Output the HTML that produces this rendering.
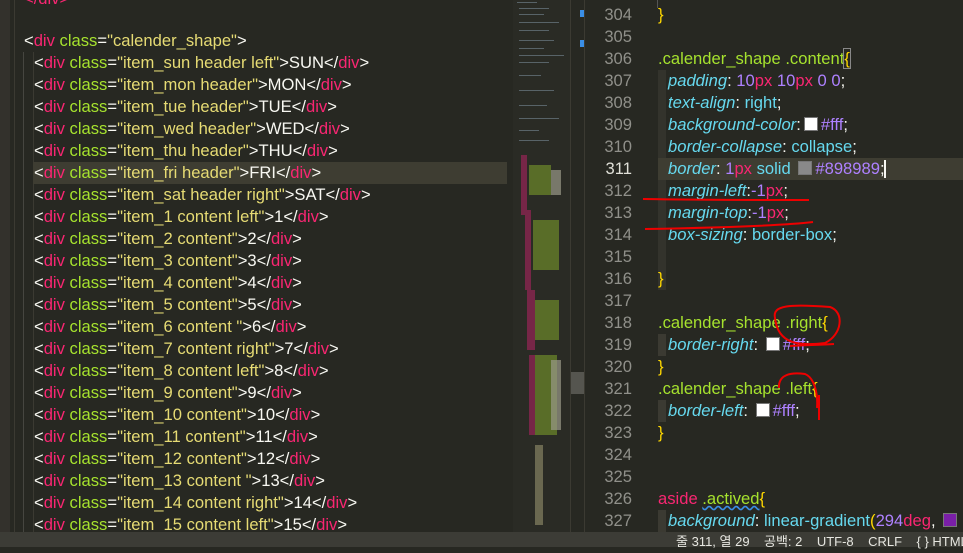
<html><head><style>
body{margin:0;width:963px;height:547px;overflow:hidden;background:#272822;font-family:"Liberation Sans","Noto Sans CJK KR",sans-serif;font-size:16.6px;position:relative}
.l{position:absolute;white-space:pre;color:#f8f8f2;height:22px;line-height:22px}
.t{color:#f92672}.a{color:#a6e22e}.s{color:#e6db74}.p{color:#66d9ef;font-style:italic}.v{color:#66d9ef}.n{color:#ae81ff}.u{color:#f92672}.b{color:#ffd800}
.num{position:absolute;left:590px;width:42px;text-align:right;color:#90908a;font-size:16.6px;line-height:22px}
.sw{display:inline-block;width:12px;height:12px;background:#fff;border:1px solid #777;vertical-align:-1px;margin:0 3px}
</style></head><body>
<div style="position:absolute;left:0;top:0;width:10px;height:547px;background:#33312c"></div>
<div style="position:absolute;left:14px;top:0;width:1px;height:547px;background:#3b3a32"></div>
<div style="position:absolute;left:23px;top:52px;width:1px;height:495px;background:#464640"></div>
<div style="position:absolute;left:33px;top:52px;width:1px;height:495px;background:#3b3a32"></div>
<div style="position:absolute;left:33px;top:162px;width:474px;height:22px;background:#3e3d32"></div>
<div style="position:absolute;left:513px;top:0;width:57px;height:547px;background:#2a2b25"></div>
<div style="position:absolute;left:570px;top:0;width:1px;height:547px;background:#3b3a32"></div>
<div style="position:absolute;left:584px;top:0;width:1px;height:547px;background:#3b3a32"></div>
<div style="position:absolute;left:571px;top:372px;width:13px;height:22px;background:#55554f"></div>
<div style="position:absolute;left:580px;top:10px;width:4px;height:7px;background:#3a8ee6"></div>
<div style="position:absolute;left:580px;top:40px;width:4px;height:7px;background:#3a8ee6"></div>
<div class="l" style="left:24px;top:-12px"><span class="t">&lt;/div&gt;</span></div>
<div class="l" style="left:24px;top:30px">&lt;<span class="t">div</span> <span class="a">class</span>=<span class="s">"calender_shape"</span>&gt;</div>
<div class="l" style="left:34px;top:52px">&lt;<span class="t">div</span> <span class="a">class</span>=<span class="s">"item_sun header left"</span>&gt;SUN&lt;/<span class="t">div</span>&gt;</div>
<div class="l" style="left:34px;top:74px">&lt;<span class="t">div</span> <span class="a">class</span>=<span class="s">"item_mon header"</span>&gt;MON&lt;/<span class="t">div</span>&gt;</div>
<div class="l" style="left:34px;top:96px">&lt;<span class="t">div</span> <span class="a">class</span>=<span class="s">"item_tue header"</span>&gt;TUE&lt;/<span class="t">div</span>&gt;</div>
<div class="l" style="left:34px;top:118px">&lt;<span class="t">div</span> <span class="a">class</span>=<span class="s">"item_wed header"</span>&gt;WED&lt;/<span class="t">div</span>&gt;</div>
<div class="l" style="left:34px;top:140px">&lt;<span class="t">div</span> <span class="a">class</span>=<span class="s">"item_thu header"</span>&gt;THU&lt;/<span class="t">div</span>&gt;</div>
<div class="l" style="left:34px;top:162px">&lt;<span class="t">div</span> <span class="a">class</span>=<span class="s">"item_fri header"</span>&gt;FRI&lt;/<span class="t">div</span>&gt;</div>
<div class="l" style="left:34px;top:184px">&lt;<span class="t">div</span> <span class="a">class</span>=<span class="s">"item_sat header right"</span>&gt;SAT&lt;/<span class="t">div</span>&gt;</div>
<div class="l" style="left:34px;top:206px">&lt;<span class="t">div</span> <span class="a">class</span>=<span class="s">"item_1 content left"</span>&gt;1&lt;/<span class="t">div</span>&gt;</div>
<div class="l" style="left:34px;top:228px">&lt;<span class="t">div</span> <span class="a">class</span>=<span class="s">"item_2 content"</span>&gt;2&lt;/<span class="t">div</span>&gt;</div>
<div class="l" style="left:34px;top:250px">&lt;<span class="t">div</span> <span class="a">class</span>=<span class="s">"item_3 content"</span>&gt;3&lt;/<span class="t">div</span>&gt;</div>
<div class="l" style="left:34px;top:272px">&lt;<span class="t">div</span> <span class="a">class</span>=<span class="s">"item_4 content"</span>&gt;4&lt;/<span class="t">div</span>&gt;</div>
<div class="l" style="left:34px;top:294px">&lt;<span class="t">div</span> <span class="a">class</span>=<span class="s">"item_5 content"</span>&gt;5&lt;/<span class="t">div</span>&gt;</div>
<div class="l" style="left:34px;top:316px">&lt;<span class="t">div</span> <span class="a">class</span>=<span class="s">"item_6 content "</span>&gt;6&lt;/<span class="t">div</span>&gt;</div>
<div class="l" style="left:34px;top:338px">&lt;<span class="t">div</span> <span class="a">class</span>=<span class="s">"item_7 content right"</span>&gt;7&lt;/<span class="t">div</span>&gt;</div>
<div class="l" style="left:34px;top:360px">&lt;<span class="t">div</span> <span class="a">class</span>=<span class="s">"item_8 content left"</span>&gt;8&lt;/<span class="t">div</span>&gt;</div>
<div class="l" style="left:34px;top:382px">&lt;<span class="t">div</span> <span class="a">class</span>=<span class="s">"item_9 content"</span>&gt;9&lt;/<span class="t">div</span>&gt;</div>
<div class="l" style="left:34px;top:404px">&lt;<span class="t">div</span> <span class="a">class</span>=<span class="s">"item_10 content"</span>&gt;10&lt;/<span class="t">div</span>&gt;</div>
<div class="l" style="left:34px;top:426px">&lt;<span class="t">div</span> <span class="a">class</span>=<span class="s">"item_11 content"</span>&gt;11&lt;/<span class="t">div</span>&gt;</div>
<div class="l" style="left:34px;top:448px">&lt;<span class="t">div</span> <span class="a">class</span>=<span class="s">"item_12 content"</span>&gt;12&lt;/<span class="t">div</span>&gt;</div>
<div class="l" style="left:34px;top:470px">&lt;<span class="t">div</span> <span class="a">class</span>=<span class="s">"item_13 content "</span>&gt;13&lt;/<span class="t">div</span>&gt;</div>
<div class="l" style="left:34px;top:492px">&lt;<span class="t">div</span> <span class="a">class</span>=<span class="s">"item_14 content right"</span>&gt;14&lt;/<span class="t">div</span>&gt;</div>
<div class="l" style="left:34px;top:514px">&lt;<span class="t">div</span> <span class="a">class</span>=<span class="s">"item_15 content left"</span>&gt;15&lt;/<span class="t">div</span>&gt;</div>

<svg style="position:absolute;left:515px;top:0" width="55" height="530">
<g fill="#5d6a70" opacity=".9">
<rect x="2" y="2" width="20" height="1"/><rect x="4" y="8" width="30" height="1"/><rect x="4" y="14" width="25" height="1"/><rect x="4" y="22" width="40" height="1"/><rect x="4" y="30" width="30" height="1"/><rect x="4" y="40" width="35" height="1"/><rect x="4" y="48" width="25" height="1"/><rect x="4" y="55" width="45" height="1"/><rect x="4" y="62" width="30" height="1"/><rect x="4" y="75" width="22" height="1"/><rect x="4" y="90" width="35" height="1"/><rect x="4" y="105" width="28" height="1"/><rect x="4" y="118" width="40" height="1"/><rect x="4" y="130" width="20" height="1"/><rect x="4" y="140" width="30" height="1"/>
</g>
<g fill="#8a2550" opacity=".8"><rect x="6" y="155" width="6" height="60"/><rect x="10" y="210" width="6" height="80"/><rect x="12" y="290" width="8" height="60"/><rect x="14" y="355" width="6" height="80"/></g>
<g fill="#6e8a2a" opacity=".7"><rect x="14" y="165" width="22" height="30"/><rect x="18" y="220" width="26" height="50"/><rect x="20" y="300" width="24" height="40"/><rect x="20" y="355" width="22" height="80"/></g>
<g fill="#9a9a88" opacity=".7"><rect x="36" y="170" width="10" height="25"/><rect x="36" y="360" width="10" height="70"/></g>
<g fill="#6a6850"><rect x="20" y="445" width="8" height="80"/></g>
</svg>

<div style="position:absolute;left:657px;top:0;width:1px;height:8px;background:#555"></div>
<div class="num" style="top:4px">304</div>
<div class="num" style="top:26px">305</div>
<div class="num" style="top:48px">306</div>
<div class="num" style="top:70px">307</div>
<div class="num" style="top:92px">308</div>
<div class="num" style="top:114px">309</div>
<div class="num" style="top:136px">310</div>
<div class="num" style="top:158px;color:#e0e0d8">311</div>
<div class="num" style="top:180px">312</div>
<div class="num" style="top:202px">313</div>
<div class="num" style="top:224px">314</div>
<div class="num" style="top:246px">315</div>
<div class="num" style="top:268px">316</div>
<div class="num" style="top:290px">317</div>
<div class="num" style="top:312px">318</div>
<div class="num" style="top:334px">319</div>
<div class="num" style="top:356px">320</div>
<div class="num" style="top:378px">321</div>
<div class="num" style="top:400px">322</div>
<div class="num" style="top:422px">323</div>
<div class="num" style="top:444px">324</div>
<div class="num" style="top:466px">325</div>
<div class="num" style="top:488px">326</div>
<div class="num" style="top:510px">327</div>
<div style="position:absolute;left:658px;top:70px;width:8px;height:220px;background:#33332c"></div>
<div style="position:absolute;left:658px;top:158px;width:305px;height:22px;background:#3e3d32"></div>
<div style="position:absolute;left:658px;top:334px;width:8px;height:22px;background:#3b3a32"></div>
<div style="position:absolute;left:658px;top:400px;width:8px;height:22px;background:#3b3a32"></div>
<div style="position:absolute;left:658px;top:510px;width:8px;height:22px;background:#3b3a32"></div>
<div class="l b" style="left:658px;top:4px">}</div>
<div class="l" style="left:658px;top:48px"><span class="a">.calender_shape .content</span><span class="b" style="outline:1px solid #888">{</span></div>
<div class="l" style="left:668px;top:70px"><span class="p">padding</span>: <span class="n">10</span><span class="u">px</span> <span class="n">10</span><span class="u">px</span> <span class="n">0 0</span>;</div>
<div class="l" style="left:668px;top:92px"><span class="p">text-align</span>: <span class="v">right</span>;</div>
<div class="l" style="left:668px;top:114px"><span class="p">background-color</span>:<span class="sw"></span><span class="n">#fff</span>;</div>
<div class="l" style="left:668px;top:136px"><span class="p">border-collapse</span>: <span class="v">collapse</span>;</div>
<div class="l" style="left:668px;top:158px"><span class="p">border</span>: <span class="n">1</span><span class="u">px</span> <span class="v">solid</span> <span class="sw" style="background:#898989"></span><span class="n">#898989</span>;</div>
<div class="l" style="left:668px;top:180px"><span class="p">margin-left</span>:<span class="n">-1</span><span class="u">px</span>;</div>
<div class="l" style="left:668px;top:202px"><span class="p">margin-top</span>:<span class="n">-1</span><span class="u">px</span>;</div>
<div class="l" style="left:668px;top:224px"><span class="p">box-sizing</span>: <span class="v">border-box</span>;</div>
<div class="l b" style="left:658px;top:268px">}</div>
<div class="l" style="left:658px;top:312px"><span class="a">.calender_shape .right</span><span class="b">{</span></div>
<div class="l" style="left:668px;top:334px"><span class="p">border-right</span>: <span class="sw"></span><span class="n">#fff</span>;</div>
<div class="l b" style="left:658px;top:356px">}</div>
<div class="l" style="left:658px;top:378px"><span class="a">.calender_shape .left</span><span class="b">{</span></div>
<div class="l" style="left:668px;top:400px"><span class="p">border-left</span>: <span class="sw"></span><span class="n">#fff</span>;</div>
<div class="l b" style="left:658px;top:422px">}</div>
<div class="l" style="left:658px;top:488px"><span class="t">aside</span> <span class="a" style="text-decoration:underline wavy #3a8ee6">.actived</span><span class="b">{</span></div>
<div class="l" style="left:668px;top:510px"><span class="p">background</span>: <span class="v">linear-gradient</span><span class="b">(</span><span class="n">294</span><span class="u">deg</span>, <span class="sw" style="background:#7a1fa8"></span></div>

<svg style="position:absolute;left:0;top:0" width="963" height="547" fill="none" stroke="#e00" stroke-width="2">
<path d="M643 199 C700 200 760 200 809 200"/>
<path d="M645 229 C700 228 780 226 813 222"/>
<path d="M775 318 C772 305 790 304 830 307 C845 312 842 335 825 343 C800 346 778 345 775 318 Z M790 346 C805 345 820 345 834 344"/>
<path d="M779 388 C778 375 790 372 805 374 C815 378 818 395 817 408 M819 395 L819 420"/>
</svg>

<div style="position:absolute;left:0;top:532px;width:963px;height:15px;background:#3c3c36"></div>
<div class="l" style="left:676px;top:531px;font-size:13px;color:#e6e6e0;line-height:22px">줄 311, 열 29&nbsp;&nbsp;&nbsp;&nbsp;공백: 2&nbsp;&nbsp;&nbsp;&nbsp;UTF-8&nbsp;&nbsp;&nbsp;&nbsp;CRLF&nbsp;&nbsp;&nbsp;&nbsp;{ } HTML</div>
<div style="position:absolute;left:884px;top:160px;width:2px;height:18px;background:#f8f8f2"></div>
</body></html>
